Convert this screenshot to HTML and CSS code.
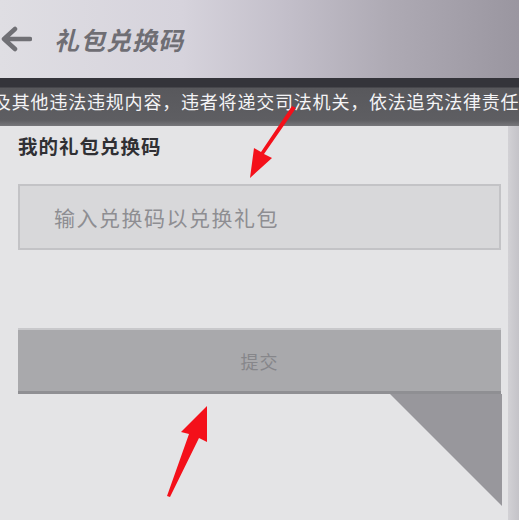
FILE: index.html
```html
<!DOCTYPE html>
<html lang="zh">
<head>
    <meta charset="utf-8">
    <meta name="viewport" content="width=device-width, initial-scale=1.0">
    <title>礼包兑换码</title>
    <link rel="stylesheet" href="styles.css">
</head>
<body>

    <div class="header">
        <a class="back">
            <svg width="32" height="28" viewBox="0 0 32 28">
                <path d="M30 14H5M15 4L4 14l11 10" fill="none" stroke="#707075" stroke-width="4.5" stroke-linecap="round" stroke-linejoin="round"/>
            </svg>
        </a>
        <h1 class="title">礼包兑换码</h1>
    </div>

    <div class="notice">及其他违法违规内容，违者将递交司法机关，依法追究法律责任</div>

    <div class="container">
        <div class="panel">
            <label for="code">我的礼包兑换码</label>
            <input type="text" id="code" placeholder="输入兑换码以兑换礼包">
            <button type="button" class="submit-btn">提交</button>
        </div>
        <div class="side"></div>

        <div class="shade"></div>
        <svg class="arrow arrow-top" width="60" height="80" viewBox="0 0 60 80">
            <path d="M54 4 L22 50 L30 54 L8 74 L12 44 L19 48 L50 2 Z" fill="#f4101a"/>
        </svg>
        <svg class="arrow arrow-bottom" width="50" height="100" viewBox="0 0 50 100">
            <path d="M4 96 L26 34 L18 32 L44 6 L44 42 L36 38 L7 97 Z" fill="#f4101a"/>
        </svg>
    </div>

</body>
</html>
```

FILE: styles.css
```css
* {
    margin: 0;
    padding: 0;
    box-sizing: border-box;
}
body {
    width: 519px;
    height: 520px;
    overflow: hidden;
    background: #e4e4e6;
    font-family: "Noto Sans CJK SC", "Noto Sans", sans-serif;
}
.header {
    display: flex;
    align-items: center;
    height: 78px;
    padding-left: 0;
    background: linear-gradient(90deg, #dfdee3 0%, #d6d3dc 35%, #c3bfca 55%, #aeaab4 75%, #9a96a0 100%);
}
.back {
    display: flex;
    width: 34px;
}
.title {
    margin-left: 20px;
    font-size: 25px;
    font-style: italic;
    font-weight: bold;
    color: #6f6e74;
    letter-spacing: 1px;
}
.notice {
    height: 48px;
    line-height: 46px;
    margin-left: -7px;
    background: linear-gradient(180deg, #34343a 0px, #34343a 9px, #58585c 10px, #5e5e62 42px, #77777b 48px);
    color: #f4f4f6;
    font-size: 18px;
    letter-spacing: 0.8px;
    white-space: nowrap;
    overflow: hidden;
}
.container {
    position: relative;
    display: flex;
    height: 394px;
}
.panel {
    flex: 1;
    display: flex;
    flex-direction: column;
    padding: 6px 7px 0 18px;
    background: #e4e4e6;
}
.side {
    width: 11px;
    background: linear-gradient(90deg, #d2d1d5, #c4c3c8);
}
label {
    display: block;
    font-size: 19.5px;
    font-weight: bold;
    color: #303034;
    letter-spacing: 1px;
    line-height: 28px;
}
input {
    width: 100%;
    height: 66px;
    margin-top: 24px;
    padding-left: 34px;
    background: #d8d8da;
    border: 2px solid #c3c3c6;
    font-family: inherit;
    font-size: 21px;
    letter-spacing: 1.5px;
    outline: none;
}
input::placeholder {
    color: #8e8e92;
}
.submit-btn {
    width: 100%;
    height: 66px;
    margin-top: 78px;
    background: #a9a9ac;
    border: none;
    border-top: 2px solid #c8c8cb;
    border-bottom: 3px solid #8f8f93;
    font-family: inherit;
    font-size: 18px;
    color: #86868a;
    letter-spacing: 1px;
}
.shade {
    position: absolute;
    left: 390px;
    top: 268px;
    width: 112px;
    height: 112px;
    background: #98979c;
    clip-path: polygon(0 0, 100% 0, 100% 100%);
}
.arrow {
    position: absolute;
}
.arrow-top {
    left: 242px;
    top: -22px;
}
.arrow-bottom {
    left: 163px;
    top: 274px;
}
```
